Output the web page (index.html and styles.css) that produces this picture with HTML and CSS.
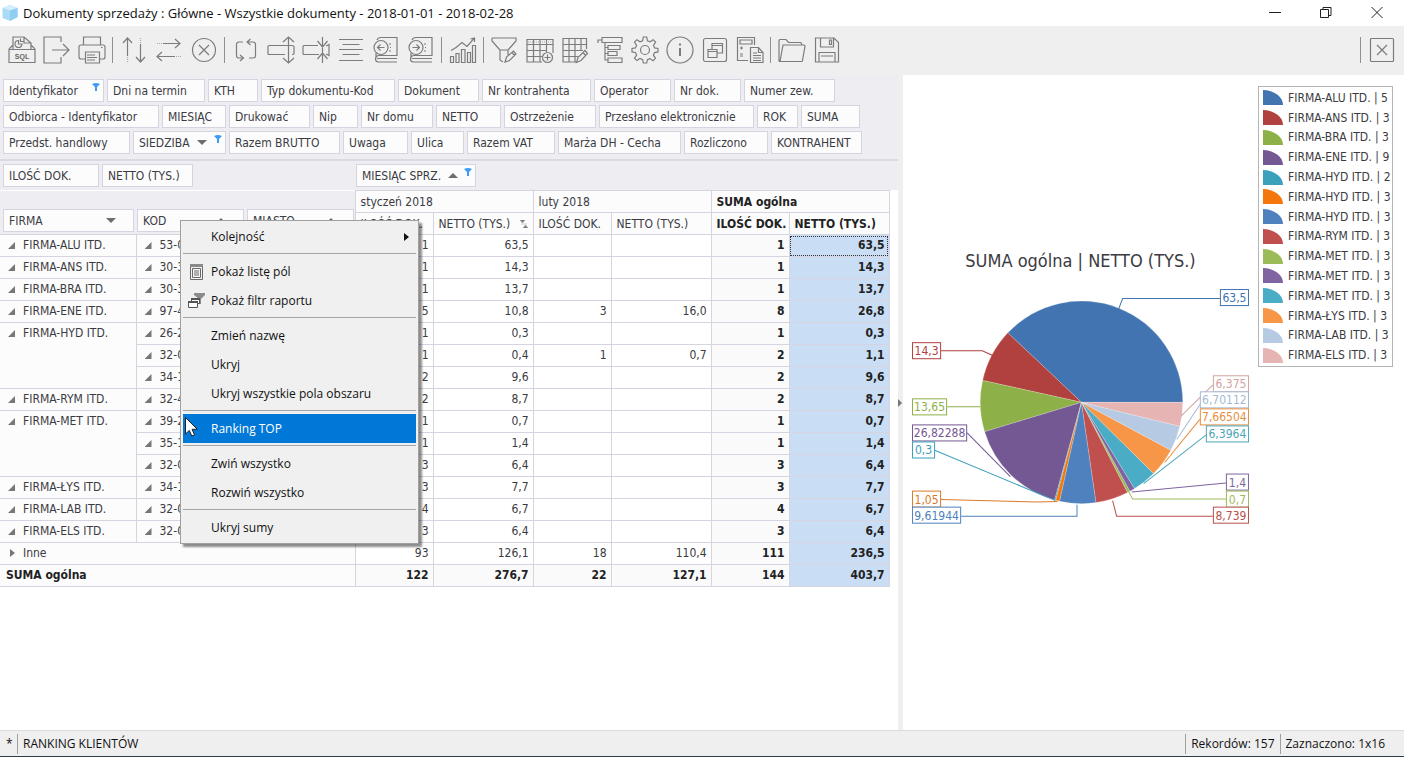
FILE: index.html
```html
<!DOCTYPE html>
<html lang="pl">
<head>
<meta charset="utf-8">
<meta name="viewport" content="width=device-width, initial-scale=1">
<title>Dokumenty sprzedaży</title>
<link rel="stylesheet" href="styles.css">
</head>
<body>
<header class="titlebar">
  <svg class="app-icon" viewBox="0 0 16 16" aria-hidden="true"><path d="M8 0l7.500 3v9L8 16 .5 13V3z" fill="#a9dcf7"/><path d="M8 0l7.500 3L8 5.500.5 3z" fill="#d3effc"/><path d="M8 5.500V16l7.500-4V3z" fill="#8fcdf1"/></svg>
  <h1 class="title">Dokumenty sprzedaży : Główne - Wszystkie dokumenty - 2018-01-01 - 2018-02-28</h1>
  <div class="window-buttons">
    <button class="win-btn" aria-label="Minimalizuj"><svg viewBox="0 0 12 12"><path d="M0 5.500h12"/></svg></button>
    <button class="win-btn" aria-label="Przywróć"><svg viewBox="0 0 12 12"><path d="M.5 2.500h8v8h-8zM3 2V.5h8v8H9"/></svg></button>
    <button class="win-btn" aria-label="Zamknij"><svg viewBox="0 0 12 12"><path d="M.5 0l11 11M11.500 0l-11 11"/></svg></button>
  </div>
</header>

<nav class="toolbar" aria-label="Narzędzia">
  <button class="tool" aria-label="SQL"><svg viewBox="0 0 28 28"><path d="M1 13.500h26v13H1zM5 13V1h11l7 6v6M16 1v6h7M5 9l-4 4M23 9l4 4M10.500 4.500a3.500 3.500 0 1 0 3.500 3.500h-3.500zM12.500 2.500v3h3"/><text class="sql" x="14" y="22.500">SQL</text></svg></button>
  <button class="tool" aria-label="Eksport"><svg viewBox="0 0 28 28"><path d="M18 6V1H1v26h17v-6M9 14h17M20 8l6 6-6 6"/></svg></button>
  <button class="tool" aria-label="Drukuj"><svg viewBox="0 0 28 28"><path d="M5.500 9V1h17v8M7 23H3q-2 0-2-2V11q0-2 2-2h22q2 0 2 2v10q0 2-2 2h-3M7.500 16h14v11h-14zM9 19h8M9 21.500h10M9 24h8M23 11.500h1.500"/></svg></button>
  <span class="tool-sep"></span>
  <button class="tool" aria-label="Sortuj"><svg viewBox="0 0 28 28"><path d="M7.500 2v18M3 7l4.500-5L12 7M20.500 8v18M16 21l4.500 5 4.500-5"/><path class="dots" d="M7.500 21v5M20.500 2v5"/></svg></button>
  <button class="tool" aria-label="Zamień"><svg viewBox="0 0 28 28"><path d="M8 7.500h17M20 3l5 4.500L20 12M20 20.500H2M7 16l-5 4.500L7 25"/><path class="dots" d="M2 7.500h5M21 20.500h5"/></svg></button>
  <button class="tool" aria-label="Anuluj"><svg viewBox="0 0 28 28"><circle cx="14" cy="14" r="11.500"/><path d="M9 9l10 10M19 9L9 19"/></svg></button>
  <span class="tool-sep"></span>
  <button class="tool" aria-label="Odśwież"><svg viewBox="0 0 28 28"><path d="M11 6H7Q4.500 6 4.500 8.500v11Q4.500 22 7 22h4M8 19l3.500 3L8 25M17 22h4q2.500 0 2.500-2.500v-11Q23.500 6 21 6h-5M18.500 3L15 6l3.500 3"/></svg></button>
  <button class="tool" aria-label="Rozwiń wiersz"><svg viewBox="0 0 28 28"><path d="M21.500 1v26M16 6l5.500-5L27 6M16 22l5.500 5 5.500-5M18 18.500H2q-1 0-1-1v-7q0-1 1-1h23q2 0 2 1v7q0 1-2 1"/></svg></button>
  <button class="tool" aria-label="Zwiń wiersz"><svg viewBox="0 0 28 28"><path d="M20.500 1v26M15.500 5l5 6 5-6M15.500 23l5-6 5 6M17 18.500H2q-1 0-1-1v-7q0-1 1-1h14M24 10l3-1.500v11L24 18"/></svg></button>
  <button class="tool" aria-label="Wyrównaj"><svg viewBox="0 0 28 28"><path d="M2 3.500h24M5.500 8.500h17M2 13.500h24M5.500 18.500h17M2 24.500h24"/></svg></button>
  <button class="tool" aria-label="Poprzedni"><svg viewBox="0 0 28 28"><circle cx="9" cy="11.500" r="7"/><path d="M12.500 11.500H5.500M8.500 8.500l-3 3 3 3M5 4q1-2.500 4-2.500h16v18H6.500Q3.500 20 3.500 23t3 3H25M5 22.500h20M17 8h2M18 11.500h1M17 15h2M4 17v5"/></svg></button>
  <button class="tool" aria-label="Następny"><svg viewBox="0 0 28 28"><circle cx="9" cy="11.500" r="7"/><path d="M5.500 11.500h7M9.500 8.500l3 3-3 3M5 4q1-2.500 4-2.500h16v18H6.500Q3.500 20 3.500 23t3 3H25M5 22.500h20M17 8h2M18 11.500h1M17 15h2M4 17v5"/></svg></button>
  <span class="tool-sep"></span>
  <button class="tool" aria-label="Wykres"><svg viewBox="0 0 28 28"><path d="M1.500 20.500h3v6h-3zM7 17.500h3v9H7zM12.500 13.500h3.500v13h-3.500zM18.500 16.500h3v10h-3zM23.500 9.500h3v17h-3zM2 14.500l5-3 6-5 5 4L25 2.500M21.500 3l4-1v4"/></svg></button>
  <span class="tool-sep"></span>
  <button class="tool" aria-label="Filtr"><svg viewBox="0 0 28 28"><path d="M1 2h24v3l-8 9v5M1 2v3l8 9v10l3 2M9 14h8M14 26l1.500-5 7-6 2.500 3-6.500 6.500zM21 16.500l2.500 3"/></svg></button>
  <button class="tool" aria-label="Dodaj tabelę"><svg viewBox="0 0 28 28"><path d="M16 26H1V3.500h26V17M1 8.500h26M1 14.500h20M1 20.500h15M7.500 3.500V26M14 3.500V26M20.500 3.500V16"/><circle cx="21.500" cy="21.500" r="5"/><path d="M21.500 18.500v6M18.500 21.500h6"/><path class="dots" d="M2 6h24"/></svg></button>
  <button class="tool" aria-label="Edytuj tabelę"><svg viewBox="0 0 28 28"><path d="M15 26H2V2.500h23.500V13M2 8.500h23.500M2 14.500h20M2 20.500h15M8 2.500V26M14 2.500V26M20 2.500V15M15.500 26.500l1.500-5 7-7 2.500 3-6.500 7zM22 16.500l2.500 3"/></svg></button>
  <button class="tool" aria-label="Struktura"><svg viewBox="0 0 28 28"><path d="M6 1.500h20v5H6zM12 9.500h12v4H12zM12 15.500h9v4h-9zM12 22h14v4.500H12zM6 4H2v3M9 6.500V24h3M9 11.500h3M9 17.500h3"/></svg></button>
  <button class="tool" aria-label="Ustawienia"><svg viewBox="0 0 28 28"><circle cx="14" cy="14" r="4.500"/><path d="M12.300 1h3.400l.7 3.700 2.700 1.100 3.100-2.100 2.400 2.400-2.100 3.100 1.100 2.700 3.400.6v3.400l-3.500.7-1.100 2.600 2.100 3.100-2.400 2.400-3.100-2.100-2.600 1.100-.7 3.300h-3.400l-.7-3.400-2.600-1.100-3.100 2.100-2.400-2.400 2.100-3.100-1.100-2.600L1 15.900v-3.400l3.500-.6 1.100-2.700-2.100-3.100 2.400-2.400 3.100 2.100 2.600-1.100z"/></svg></button>
  <button class="tool" aria-label="Informacje"><svg viewBox="0 0 28 28"><circle cx="14" cy="14" r="13"/><path class="bold" d="M14 12v8M14 7.500v2"/></svg></button>
  <button class="tool" aria-label="Okna"><svg viewBox="0 0 28 28"><rect x="2.500" y="2.500" width="23" height="23" rx="2"/><path d="M7 13.500h9v8H7zM11 13V7.500h10.500V17H16M11 9.500h10.500M7 15.500h9"/></svg></button>
  <button class="tool" aria-label="Obliczenia"><svg viewBox="0 0 28 28"><path d="M12 24.500H1.500v-23h17V9M4 4h12v4H4zM14.500 11.500h8l4.500 5v10H14.500zM22.500 11.500v5H27M17 17h4M17 19.500h8M17 22h8M17 24.500h8M4 12h3M5.500 10.500v3M4 18h3M4 20h3"/></svg></button>
  <span class="tool-sep"></span>
  <button class="tool" aria-label="Otwórz"><svg viewBox="0 0 28 28"><path d="M2 25.500q-1 0-1-1V4.500q0-1 1-1h6l2.500 3h12q1 0 1 1V9M2 25.500L5 9h21q1 0 1 1l-2.500 14.500q0 1-1 1z"/></svg></button>
  <button class="tool" aria-label="Zapisz"><svg viewBox="0 0 28 28"><path d="M2.500 2h18.500l4.500 4.500V26h-23zM7.500 2v9h13V2M16.500 4h2v4.500h-2zM6 26V16.500h16V26M8 20h12"/></svg></button>
  <span class="tool-space"></span>
  <span class="tool-sep"></span>
  <button class="tool" aria-label="Zamknij raport"><svg viewBox="0 0 28 28"><rect x="2.500" y="2.500" width="23" height="23" rx="1"/><path d="M9 9l10 10M19 9L9 19"/></svg></button>
</nav>

<main class="workspace">
  <section class="pivot">
    <div class="filter-area">
      <div class="field-row">
        <button class="field w101">Identyfikator <svg class="funnel" viewBox="0 0 8 8"><path d="M0 1q4-2 8 0L5 4v4H3V4z"/></svg></button>
        <button class="field w98">Dni na termin</button>
        <button class="field w50">KTH</button>
        <button class="field w134">Typ dokumentu-Kod</button>
        <button class="field w81">Dokument</button>
        <button class="field w109">Nr kontrahenta</button>
        <button class="field w77">Operator</button>
        <button class="field w67">Nr dok.</button>
        <button class="field w91">Numer zew.</button>
      </div>
      <div class="field-row">
        <button class="field w156">Odbiorca - Identyfikator</button>
        <button class="field w64">MIESIĄC</button>
        <button class="field w81">Drukować</button>
        <button class="field w45">Nip</button>
        <button class="field w72">Nr domu</button>
        <button class="field w65">NETTO</button>
        <button class="field w92">Ostrzeżenie</button>
        <button class="field w155">Przesłano elektronicznie</button>
        <button class="field w41">ROK</button>
        <button class="field w59">SUMA</button>
      </div>
      <div class="field-row">
        <button class="field w127">Przedst. handlowy</button>
        <button class="field w93">SIEDZIBA <i class="tri-down"></i><svg class="funnel" viewBox="0 0 8 8"><path d="M0 1q4-2 8 0L5 4v4H3V4z"/></svg></button>
        <button class="field w111">Razem BRUTTO</button>
        <button class="field w65">Uwaga</button>
        <button class="field w53">Ulica</button>
        <button class="field w88">Razem VAT</button>
        <button class="field w123">Marża DH - Cecha</button>
        <button class="field w84">Rozliczono</button>
        <button class="field w91">KONTRAHENT</button>
      </div>
    </div>
    <div class="data-area">
      <div class="data-fields">
        <button class="field w96">ILOŚĆ DOK.</button>
        <button class="field w91">NETTO (TYS.)</button>
      </div>
      <button class="field w120">MIESIĄC SPRZ. <i class="tri-up"></i><svg class="funnel" viewBox="0 0 8 8"><path d="M0 1q4-2 8 0L5 4v4H3V4z"/></svg></button>
    </div>
    <table class="grid">
      <colgroup><col class="c-firma"><col class="c-kod"><col class="c-miasto"><col class="c-qty"><col class="c-net"><col class="c-qty"><col class="c-net"><col class="c-qty"><col class="c-net"></colgroup>
      <thead>
        <tr>
          <td class="corner" colspan="3" rowspan="2">
            <div class="row-fields">
              <button class="field w131">FIRMA <i class="tri-down end"></i></button>
              <button class="field w107">KOD <i class="tri-up end"></i></button>
              <button class="field w107">MIASTO <i class="tri-up end"></i></button>
            </div>
          </td>
          <th colspan="2">styczeń 2018</th><th colspan="2">luty 2018</th><th class="sum" colspan="2">SUMA ogólna</th>
        </tr>
        <tr>
          <th>ILOŚĆ DOK.</th><th><span class="sorted">NETTO (TYS.)<svg class="sort-mark" viewBox="0 0 8 8"><path d="M0 0h5L2.500 3zM3 8h5L5.500 5zM1 4h6"/></svg></span></th><th>ILOŚĆ DOK.</th><th>NETTO (TYS.)</th><th class="sum">ILOŚĆ DOK.</th><th class="sum">NETTO (TYS.)</th>
        </tr>
      </thead>
      <tbody>
        <tr><th><i class="open"></i>FIRMA-ALU ITD.</th><th><i class="open"></i>53-0</th><th></th><td>1</td><td>63,5</td><td></td><td></td><td class="total">1</td><td class="picked focus">63,5</td></tr>
        <tr><th><i class="open"></i>FIRMA-ANS ITD.</th><th><i class="open"></i>30-3</th><th></th><td>1</td><td>14,3</td><td></td><td></td><td class="total">1</td><td class="picked">14,3</td></tr>
        <tr><th><i class="open"></i>FIRMA-BRA ITD.</th><th><i class="open"></i>30-3</th><th></th><td>1</td><td>13,7</td><td></td><td></td><td class="total">1</td><td class="picked">13,7</td></tr>
        <tr><th><i class="open"></i>FIRMA-ENE ITD.</th><th><i class="open"></i>97-4</th><th></th><td>5</td><td>10,8</td><td>3</td><td>16,0</td><td class="total">8</td><td class="picked">26,8</td></tr>
        <tr><th rowspan="3"><i class="open"></i>FIRMA-HYD ITD.</th><th><i class="open"></i>26-2</th><th></th><td>1</td><td>0,3</td><td></td><td></td><td class="total">1</td><td class="picked">0,3</td></tr>
        <tr><th><i class="open"></i>32-0</th><th></th><td>1</td><td>0,4</td><td>1</td><td>0,7</td><td class="total">2</td><td class="picked">1,1</td></tr>
        <tr><th><i class="open"></i>34-1</th><th></th><td>2</td><td>9,6</td><td></td><td></td><td class="total">2</td><td class="picked">9,6</td></tr>
        <tr><th><i class="open"></i>FIRMA-RYM ITD.</th><th><i class="open"></i>32-4</th><th></th><td>2</td><td>8,7</td><td></td><td></td><td class="total">2</td><td class="picked">8,7</td></tr>
        <tr><th rowspan="3"><i class="open"></i>FIRMA-MET ITD.</th><th><i class="open"></i>39-2</th><th></th><td>1</td><td>0,7</td><td></td><td></td><td class="total">1</td><td class="picked">0,7</td></tr>
        <tr><th><i class="open"></i>35-1</th><th></th><td>1</td><td>1,4</td><td></td><td></td><td class="total">1</td><td class="picked">1,4</td></tr>
        <tr><th><i class="open"></i>32-0</th><th></th><td>3</td><td>6,4</td><td></td><td></td><td class="total">3</td><td class="picked">6,4</td></tr>
        <tr><th><i class="open"></i>FIRMA-ŁYS ITD.</th><th><i class="open"></i>34-1</th><th></th><td>3</td><td>7,7</td><td></td><td></td><td class="total">3</td><td class="picked">7,7</td></tr>
        <tr><th><i class="open"></i>FIRMA-LAB ITD.</th><th><i class="open"></i>32-0</th><th></th><td>4</td><td>6,7</td><td></td><td></td><td class="total">4</td><td class="picked">6,7</td></tr>
        <tr><th><i class="open"></i>FIRMA-ELS ITD.</th><th><i class="open"></i>32-0</th><th></th><td>3</td><td>6,4</td><td></td><td></td><td class="total">3</td><td class="picked">6,4</td></tr>
        <tr><th colspan="3"><i class="closed"></i>Inne</th><td>93</td><td>126,1</td><td>18</td><td>110,4</td><td class="total">111</td><td class="picked">236,5</td></tr>
        <tr class="grand"><th colspan="3">SUMA ogólna</th><td class="total">122</td><td class="total">276,7</td><td class="total">22</td><td class="total">127,1</td><td class="total">144</td><td class="picked">403,7</td></tr>
      </tbody>
    </table>
  </section>

  <div class="splitter"><i class="tri-right"></i></div>

  <section class="chart-pane">
    <figure class="chart">
      <figcaption class="chart-title">SUMA ogólna | NETTO (TYS.)</figcaption>
      <svg class="pie" viewBox="904 280 354 250" role="img" aria-label="SUMA ogólna | NETTO (TYS.)">
        <g class="slices">
          <path fill="#4174b0" d="M1082 402L1183 402A101 101 0 0 0 1008.500 332.700z"/>
          <path fill="#b0413e" d="M1082 402L1008.500 332.700A101 101 0 0 0 983.400 380.100z"/>
          <path fill="#8db048" d="M1082 402L983.400 380.100A101 101 0 0 0 985.400 431.300z"/>
          <path fill="#745893" d="M1082 402L985.400 431.300A101 101 0 0 0 1055.200 499.400z"/>
          <path fill="#3ba0bb" d="M1082 402L1055.200 499.400A101 101 0 0 0 1056.300 499.700z"/>
          <path fill="#f4770d" d="M1082 402L1056.300 499.700A101 101 0 0 0 1060.200 500.600z"/>
          <path fill="#4e81bd" d="M1082 402L1060.200 500.600A101 101 0 0 0 1096.500 502z"/>
          <path fill="#c0504d" d="M1082 402L1096.500 502A101 101 0 0 0 1127.900 491.900z"/>
          <path fill="#9bbb59" d="M1082 402L1127.900 491.900A101 101 0 0 0 1130.300 490.700z"/>
          <path fill="#8064a2" d="M1082 402L1130.300 490.700A101 101 0 0 0 1134.900 488z"/>
          <path fill="#4bacc6" d="M1082 402L1134.900 488A101 101 0 0 0 1153.900 473z"/>
          <path fill="#f79646" d="M1082 402L1153.900 473A101 101 0 0 0 1171.100 449.700z"/>
          <path fill="#b6cae3" d="M1082 402L1171.100 449.700A101 101 0 0 0 1180.100 425.900z"/>
          <path fill="#e5b4b3" d="M1082 402L1180.100 425.900A101 101 0 0 0 1183 402z"/>
        </g>
        <g class="call" stroke="#4174b0"><path d="M1119 309l4-10.500h97"/><rect x="1220.500" y="289.500" width="28" height="16"/><text fill="#4174b0" x="1234.500" y="302">63,5</text></g>
        <g class="call" stroke="#b0413e"><path d="M993 355l-10-4.500h-41"/><rect x="913.500" y="342.500" width="28" height="16"/><text fill="#b0413e" x="927.500" y="355">14,3</text></g>
        <g class="call" stroke="#8db048"><path d="M981 406.500h-33"/><rect x="913.500" y="398.500" width="34" height="16"/><text fill="#8db048" x="930.500" y="411">13,65</text></g>
        <g class="call" stroke="#745893"><path d="M1011 476l-43-43.500"/><rect x="913.500" y="424.500" width="54" height="16"/><text fill="#745893" x="940.500" y="437">26,82288</text></g>
        <g class="call" stroke="#3ba0bb"><path d="M1056 500L935 449.500"/><rect x="913.500" y="441.500" width="22" height="16"/><text fill="#3ba0bb" x="924.500" y="454">0,3</text></g>
        <g class="call" stroke="#d97a2a"><path d="M1058 501l-20 .5-96-2.500"/><rect x="913.500" y="490.500" width="28" height="16"/><text fill="#d97a2a" x="927.500" y="503">1,05</text></g>
        <g class="call" stroke="#4e81bd"><path d="M1077.500 504v11.500H962"/><rect x="913.500" y="506.500" width="48" height="16"/><text fill="#4e81bd" x="937.500" y="519">9,61944</text></g>
        <g class="call" stroke="#d4a3a2"><path d="M1181 416l32-31.500"/><rect x="1213.500" y="375.500" width="35" height="16"/><text fill="#d4a3a2" x="1231" y="388">6,375</text></g>
        <g class="call" stroke="#a5b9d2"><path d="M1177 439l24-36"/><rect x="1200.500" y="391.500" width="48" height="16"/><text fill="#a5b9d2" x="1224.500" y="404">6,70112</text></g>
        <g class="call" stroke="#e78e3e"><path d="M1165 462l35-43"/><rect x="1200.500" y="408.500" width="48" height="16"/><text fill="#e78e3e" x="1224.500" y="421">7,66504</text></g>
        <g class="call" stroke="#4ca6b8"><path d="M1144 483l63-49"/><rect x="1206.500" y="425.500" width="42" height="16"/><text fill="#4ca6b8" x="1227.500" y="438">6,3964</text></g>
        <g class="call" stroke="#8064a2"><path d="M1132 491.500l94-9"/><rect x="1226.500" y="473.500" width="22" height="16"/><text fill="#8064a2" x="1237.500" y="486">1,4</text></g>
        <g class="call" stroke="#9bbb59"><path d="M1129 491l4 7.500h93"/><rect x="1226.500" y="490.500" width="22" height="16"/><text fill="#9bbb59" x="1237.500" y="503">0,7</text></g>
        <g class="call" stroke="#b9504d"><path d="M1113 500l4 15.500h96"/><rect x="1213.500" y="506.500" width="35" height="16"/><text fill="#b9504d" x="1231" y="519">8,739</text></g>
      </svg>
    </figure>
    <ul class="legend">
      <li><i class="swatch s1"></i>FIRMA-ALU ITD. | 5</li>
      <li><i class="swatch s2"></i>FIRMA-ANS ITD. | 3</li>
      <li><i class="swatch s3"></i>FIRMA-BRA ITD. | 3</li>
      <li><i class="swatch s4"></i>FIRMA-ENE ITD. | 9</li>
      <li><i class="swatch s5"></i>FIRMA-HYD ITD. | 2</li>
      <li><i class="swatch s6"></i>FIRMA-HYD ITD. | 3</li>
      <li><i class="swatch s7"></i>FIRMA-HYD ITD. | 3</li>
      <li><i class="swatch s8"></i>FIRMA-RYM ITD. | 3</li>
      <li><i class="swatch s9"></i>FIRMA-MET ITD. | 3</li>
      <li><i class="swatch s10"></i>FIRMA-MET ITD. | 3</li>
      <li><i class="swatch s11"></i>FIRMA-MET ITD. | 3</li>
      <li><i class="swatch s12"></i>FIRMA-ŁYS ITD. | 3</li>
      <li><i class="swatch s13"></i>FIRMA-LAB ITD. | 3</li>
      <li><i class="swatch s14"></i>FIRMA-ELS ITD. | 3</li>
    </ul>
  </section>
</main>

<div class="menu" role="menu">
  <button class="item" role="menuitem"><span class="mi"></span>Kolejność<i class="tri-right sub"></i></button>
  <hr>
  <button class="item" role="menuitem"><span class="mi"><svg viewBox="0 0 18 18"><path fill="#f4f4f4" stroke="#6a6a6a" d="M3.500 1.500h12v15h-12z"/><path fill="#8a8a8a" d="M3 1h13v3H3z"/><path fill="none" stroke="#6a6a6a" d="M5.500 5.500h8v9h-8zM7 8h5M7 10h5M7 12h5"/></svg></span>Pokaż listę pól</button>
  <button class="item" role="menuitem"><span class="mi"><svg viewBox="0 0 18 18"><path fill="#8c8c8c" d="M7 1h11v2l-4 4v5h-2V7L7 3z"/><path fill="#fff" stroke="#555" d="M4.500 6.500h8v5h-8z"/><path fill="#fff" stroke="#555" d="M1.500 9.500h9v6h-9z"/><path fill="#555" d="M1 9h10v2H1zM4 6h9v2H4z"/></svg></span>Pokaż filtr raportu</button>
  <hr>
  <button class="item" role="menuitem"><span class="mi"></span>Zmień nazwę</button>
  <button class="item" role="menuitem"><span class="mi"></span>Ukryj</button>
  <button class="item" role="menuitem"><span class="mi"></span>Ukryj wszystkie pola obszaru</button>
  <hr>
  <button class="item active" role="menuitem"><span class="mi"></span>Ranking TOP</button>
  <hr>
  <button class="item" role="menuitem"><span class="mi"></span>Zwiń wszystko</button>
  <button class="item" role="menuitem"><span class="mi"></span>Rozwiń wszystko</button>
  <hr>
  <button class="item" role="menuitem"><span class="mi"></span>Ukryj sumy</button>
</div>
<svg class="pointer" viewBox="0 0 13 20" aria-hidden="true"><path d="M.5.5v16.500l3.800-3.600 2.500 5.600 2.700-1.200L7 12.300h5.300z" fill="#fff" stroke="#222"/></svg>

<footer class="statusbar">
  <span class="dirty">*</span>
  <span class="status-cell grow">RANKING KLIENTÓW</span>
  <span class="status-cell">Rekordów: 157</span>
  <span class="status-cell last">Zaznaczono: 1x16</span>
</footer>
</body>
</html>
```
FILE: styles.css
```css
* { box-sizing: border-box; }
html, body { height: 100%; }
body {
  margin: 0;
  display: flex;
  flex-direction: column;
  overflow: hidden;
  background: #fff;
  color: #3b3b42;
  font: 12px/16px "DejaVu Sans Condensed", "Noto Sans", sans-serif;
}
button { font: inherit; color: inherit; border: 0; background: none; padding: 0; margin: 0; }
svg { display: block; flex: none; }

/* Title bar */
.titlebar { flex: none; display: flex; align-items: center; height: 26px; padding: 0 2px; background: #fff; }
.app-icon { width: 16px; height: 16px; }
.title { flex: 1; margin: 0 0 0 5px; font: 13px/20px "Open Sans", sans-serif; color: #111; white-space: nowrap; }
.window-buttons { display: flex; }
.win-btn { width: 51px; height: 26px; display: grid; place-items: center; }
.win-btn svg { width: 12px; height: 12px; fill: none; stroke: #222; }

/* Toolbar */
.toolbar { flex: none; display: flex; align-items: center; height: 49px; padding: 0 5px 2px 4px; background: #efefef; }
.tool { width: 35px; height: 35px; display: grid; place-items: center; }
.tool svg { width: 28px; height: 28px; fill: none; stroke: #7c7c7c; stroke-width: 1.2; }
.tool .sql { fill: #666; stroke: none; font: bold 7px "Liberation Sans", sans-serif; text-anchor: middle; }
.tool .dots { stroke-dasharray: 1 1; stroke: #aaa; }
.tool .bold { stroke-width: 2; }
.tool-sep { width: 1px; height: 26px; margin: 0 3px; background: #909090; }
.tool-space { flex: 1; }

/* Workspace */
.workspace { flex: 1; min-height: 0; display: grid; grid-template-columns: minmax(0, 898fr) 5px minmax(0, 501fr); }
.pivot { background: #fff; overflow: hidden; }
.splitter { background: #efefef; display: flex; align-items: center; }
.chart-pane { display: flex; align-items: flex-start; padding: 11px 11px 0 0; }

/* Fields */
.filter-area { display: flex; flex-direction: column; gap: 3px; padding: 4px 3px 5px; background: #eeedf2; border-bottom: 2px solid #dad9e4; }
.field-row, .data-fields, .row-fields { display: flex; gap: 3px; }
.field { flex: none; display: flex; align-items: center; height: 23px; padding: 0 5px; border: 1px solid #d5d4e0; background: #fcfcfd; white-space: nowrap; }
.data-area { display: flex; height: 29px; padding: 3px; background: #eeedf2; }
.data-fields { width: 353px; }
.w41 { width: 41px; } .w45 { width: 45px; } .w50 { width: 50px; } .w53 { width: 53px; }
.w59 { width: 59px; } .w64 { width: 64px; } .w65 { width: 65px; } .w67 { width: 67px; }
.w72 { width: 72px; } .w77 { width: 77px; } .w81 { width: 81px; } .w84 { width: 84px; }
.w88 { width: 88px; } .w91 { width: 91px; } .w92 { width: 92px; } .w93 { width: 93px; }
.w96 { width: 96px; } .w98 { width: 98px; } .w101 { width: 101px; } .w107 { width: 107px; }
.w109 { width: 109px; } .w111 { width: 111px; } .w120 { width: 120px; } .w123 { width: 123px; }
.w127 { width: 127px; } .w131 { width: 131px; } .w134 { width: 134px; } .w155 { width: 155px; }
.w156 { width: 156px; }
.funnel { width: 8px; height: 8px; margin-left: auto; margin-bottom: 8px; margin-right: -2px; fill: #3f9cf5; }
.tri-down, .tri-up { flex: none; margin-left: 7px; border: 5px solid transparent; }
.tri-down { border-top-color: #6d6d6d; border-bottom: 0; }
.tri-up { border-bottom-color: #6d6d6d; border-top: 0; }
.end { margin-left: auto; margin-right: 12px; }
.tri-right { border: 4px solid transparent; border-left-color: #777; border-right: 0; }

/* Pivot table */
.grid { width: 889px; table-layout: fixed; border-collapse: collapse; }
.c-firma { width: 136px; } .c-kod { width: 110px; } .c-miasto { width: 109px; }
.c-qty { width: 78px; } .c-net { width: 100px; }
.grid th, .grid td { height: 22px; padding: 0 5px; border: 1px solid #d5d4e0; font-weight: normal; white-space: nowrap; overflow: hidden; }
.grid th { text-align: left; background: #fcfcfd; }
.grid td { text-align: right; }
.grid .corner { background: #eeedf2; padding: 0 3px 2px; vertical-align: bottom; border-left: 0; border-top: 0; }
.grid .sum, .grid .total, .grid .picked, .grand th { font-weight: bold; color: #222; }
.grid .total { background: #fafafb; }
.grid .picked { background: #c9ddf5; }
.grid .focus { outline: 1px dotted #333; outline-offset: -2px; }
.grid tbody th { border-left: 0; vertical-align: top; line-height: 21px; padding-left: 8px; }
.grid tbody td { line-height: 21px; padding-right: 4px; }
.grid .grand th { font-weight: bold; padding-left: 6px; }
.open { display: inline-block; width: 7px; height: 7px; margin-right: 8px; background: #777; clip-path: polygon(100% 0, 100% 100%, 0 100%); }
.closed { display: inline-block; width: 5px; height: 8px; margin: 0 8px 0 2px; background: #777; clip-path: polygon(0 0, 100% 50%, 0 100%); }
.sorted { display: flex; align-items: center; justify-content: space-between; }
.sort-mark { width: 8px; height: 8px; fill: #777; stroke: #999; stroke-width: 0.500; }

/* Chart */
.chart { flex: 1; min-width: 0; margin: 0; padding-top: 163px; }
.chart-title { font-size: 18px; line-height: 24px; text-align: center; margin-bottom: 7px; white-space: nowrap; }
.pie { width: 100%; height: auto; }
.slices path { stroke: #fff; stroke-opacity: 0.4; stroke-width: 0.500; }
.call path { fill: none; }
.call rect { fill: #fff; }
.call text { stroke: none; font-size: 12px; text-anchor: middle; }
.legend { flex: none; width: 135px; height: 281px; margin: 0; padding: 1px 0 1px 4px; display: grid; grid-auto-rows: 1fr; border: 1px solid #b5b5b5; list-style: none; overflow: hidden; }
.legend li { display: flex; align-items: center; gap: 5px; white-space: nowrap; }
.swatch { flex: none; width: 20px; height: 15px; border-top-right-radius: 20px 15px; }
.s1 { background: #4174b0; } .s2 { background: #b0413e; } .s3 { background: #8db048; } .s4 { background: #745893; }
.s5 { background: #3ba0bb; } .s6 { background: #f4770d; } .s7 { background: #4e81bd; } .s8 { background: #c0504d; }
.s9 { background: #9bbb59; } .s10 { background: #8064a2; } .s11 { background: #4bacc6; } .s12 { background: #f79646; }
.s13 { background: #b6cae3; } .s14 { background: #e5b4b3; }

/* Context menu */
.menu { position: absolute; left: 180px; top: 220px; width: 239px; padding: 1px 2px; background: #f0f0f0; border: 1px solid #a0a0a0; box-shadow: 3px 3px 2px rgba(0, 0, 0, 0.45); color: #111; font: 12px/20px "Open Sans", sans-serif; }
.item { display: flex; align-items: center; width: 100%; height: 29px; text-align: left; }
.item.active { background: #0078d7; color: #fff; }
.mi { width: 28px; padding-left: 4px; }
.mi svg { width: 18px; height: 18px; }
.menu hr { height: 1px; margin: 2px 0 3px; border: 0; background: #a5a5a5; }
.sub { margin-left: auto; margin-right: 7px; border-left-color: #111; border-left-width: 5px; }
.pointer { position: absolute; left: 185px; top: 417px; width: 13px; height: 20px; }

/* Status bar */
.statusbar { flex: none; display: flex; align-items: center; height: 27px; background: #efefef; border-top: 1px solid #dcdcdc; border-bottom: 1px solid #2f3b4a; color: #111; font: 12px/20px "Open Sans", sans-serif; }
.dirty { width: 17px; padding-left: 6px; }
.status-cell { padding: 0 5px; border-left: 1px solid #a0a0a0; }
.grow { flex: 1; }
.last { padding-right: 19px; }
```
